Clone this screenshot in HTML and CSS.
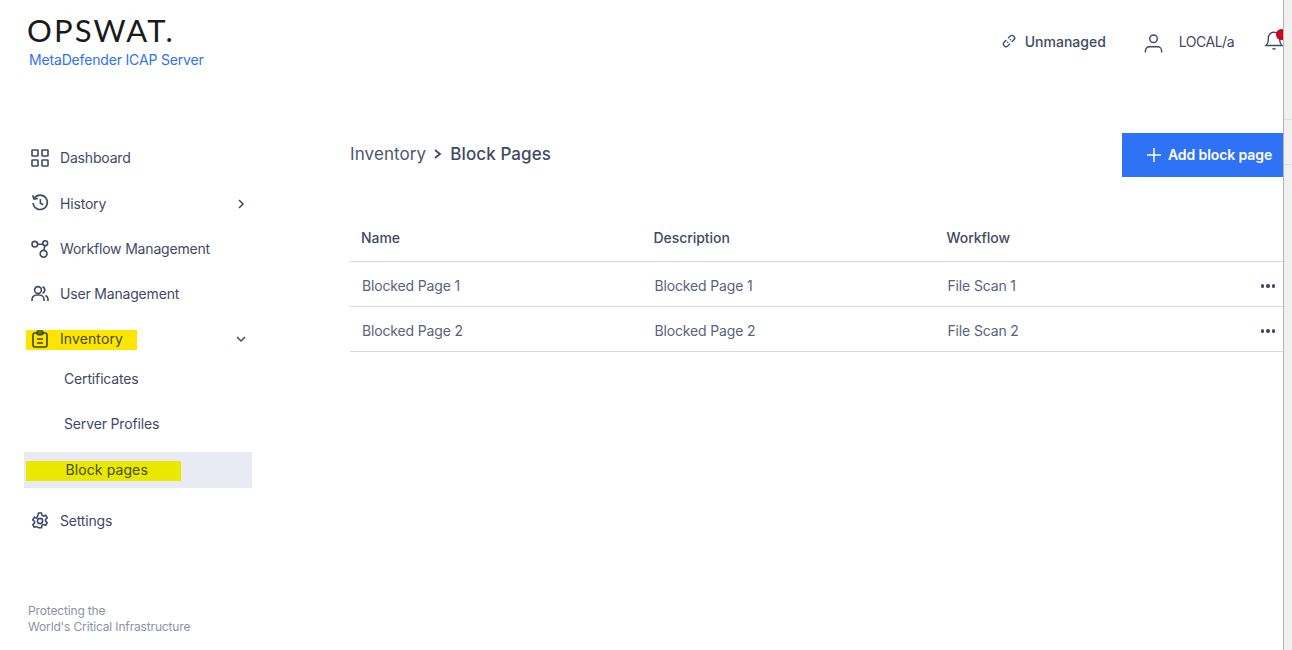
FILE: index.html
```html
<!DOCTYPE html>
<html lang="en">
<head>
<meta charset="utf-8">
<title>Block Pages</title>
<link rel="stylesheet" href="styles.css">
</head>
<body>
<div class="app">
  <aside class="sidebar">
    <div class="brand">
      <div class="logo">OPSWAT.</div>
      <div class="product">MetaDefender ICAP Server</div>
    </div>
    <nav class="nav">
      <a class="nav-item nav-first"><svg class="ico" viewBox="0 0 18 18"><rect x="1" y="1" width="6" height="6" rx=".6"/><rect x="11" y="1" width="6" height="6" rx=".6"/><rect x="1" y="11" width="6" height="6" rx=".6"/><rect x="11" y="11" width="6" height="6" rx=".6"/></svg><span>Dashboard</span></a>
      <a class="nav-item"><svg class="ico ico-up" viewBox="0 0 18 18"><path d="M3.400 4A7.200 7.200 0 1 1 2 9"/><path d="M1.600 1.200 3 5l3.800-.5"/><path d="M9.400 5v4.200l2.800 1.600"/></svg><span>History</span><svg class="chev" viewBox="0 0 12 12"><path d="M4 2l4 4-4 4"/></svg></a>
      <a class="nav-item"><svg class="ico" viewBox="0 0 18 18"><circle cx="3.800" cy="4.200" r="2.800"/><circle cx="14.200" cy="3.200" r="2.400"/><circle cx="12.600" cy="13.800" r="3.400"/><path d="M6.600 4.200h5.400M13.800 5.600l-.8 4.800"/></svg><span>Workflow Management</span></a>
      <a class="nav-item"><svg class="ico" viewBox="0 0 18 18"><circle cx="7" cy="5" r="3.400"/><path d="M1 16v-1.500A4.500 4.500 0 0 1 5.500 10h3a4.500 4.500 0 0 1 4.500 4.500V16"/><path d="M11.500 1.800a3.400 3.400 0 0 1 0 6.400M14.500 10.500a4.500 4.500 0 0 1 2.500 4V16"/></svg><span>User Management</span></a>
      <a class="nav-item nav-open"><span class="mark mark-top"></span><svg class="ico" viewBox="0 0 18 18"><rect x="2" y="3" width="14" height="14" rx="2"/><rect x="6" y="1" width="6" height="3.600" rx="1"/><path d="M6 9h6M6 13h6"/></svg><span class="label">Inventory</span><svg class="chev" viewBox="0 0 12 12"><path d="M2 4l4 4 4-4"/></svg></a>
      <a class="sub-item">Certificates</a>
      <a class="sub-item sub-gap">Server Profiles</a>
      <a class="sub-item sub-active"><span class="mark mark-sub"></span><span class="label">Block pages</span></a>
      <a class="nav-item"><svg class="ico" viewBox="0 0 18 18"><circle cx="9" cy="9" r="2.600"/><path d="M7.500 1h3l.5 2.300 1.500.8 2.200-.8 1.500 2.600-1.700 1.600v1.700l1.700 1.500-1.500 2.600-2.200-.7-1.500.8-.5 2.300h-3L7 15.400l-1.500-.8-2.200.7-1.500-2.600L3.500 11.200V9.500L1.800 7.900 3.300 5.300l2.200.8L7 3.300z"/></svg><span>Settings</span></a>
    </nav>
    <p class="tagline">Protecting the<br>World's Critical Infrastructure</p>
  </aside>
  <main class="main">
    <header class="topbar">
      <div class="status"><svg class="ico-link" viewBox="0 0 16 16"><g transform="rotate(-45 8 8)"><path d="M9.200 5.400h3.100a2.600 2.600 0 0 1 0 5.200H9.200"/><path d="M6.800 5.400H3.700a2.600 2.600 0 0 0 0 5.200h3.100"/><path d="M5.600 8h1.200M9.200 8h1.200"/></g></svg><span>Unmanaged</span></div>
      <div class="user"><svg class="ico-user" viewBox="0 0 20 20"><circle cx="10" cy="5.500" r="4"/><path d="M1.500 20v-2a4 4 0 0 1 4-4h9a4 4 0 0 1 4 4v2"/></svg><span>LOCAL/a</span></div>
      <div class="bell"><svg class="ico-bell" viewBox="0 0 20 20"><path d="M2 15.500c1.600-1.500 2.300-3 2.300-5.500V8a5.700 5.700 0 0 1 11.400 0v2c0 2.500.7 4 2.300 5.500z"/><path d="M8.500 18.300a1.800 1.800 0 0 0 3 0"/></svg><span class="dot"></span></div>
    </header>
    <section class="content">
      <div class="head">
        <h1 class="crumbs"><span class="crumb-parent">Inventory</span><svg class="crumb-sep" viewBox="0 0 10 12"><path d="M2 2l5 4-5 4"/></svg><span class="crumb-cur">Block Pages</span></h1>
        <button class="add"><svg viewBox="0 0 14 14"><path d="M7 0v14M0 7h14"/></svg><span>Add block page</span></button>
      </div>
      <div class="table">
        <div class="row row-head"><span>Name</span><span>Description</span><span>Workflow</span></div>
        <div class="row"><span>Blocked Page 1</span><span>Blocked Page 1</span><span>File Scan 1</span><b class="more"><i></i><i></i><i></i></b></div>
        <div class="row"><span>Blocked Page 2</span><span>Blocked Page 2</span><span>File Scan 2</span><b class="more"><i></i><i></i><i></i></b></div>
      </div>
    </section>
  </main>
  <div class="gutter"><span class="tick tick-1"></span><span class="tick tick-2"></span></div>
</div>
</body>
</html>
```

FILE: styles.css
```css
* { box-sizing: border-box; }
html, body { margin: 0; height: 100%; overflow: hidden; background: #fff; }
body { font-family: Inter, "Liberation Sans", sans-serif; color: #3f4a65; font-size: 14px; }
.app { display: flex; width: 1292px; height: 650px; }

.sidebar { width: 320px; flex: none; padding: 0 0 0 24px; display: flex; flex-direction: column; }
.brand { padding: 15px 0 0 4px; height: 135px; }
.logo { margin-left: -1px; font-family: Lato, sans-serif; font-weight: 400; font-size: 31px; line-height: 30px; letter-spacing: 2.1px; color: #1a1a1a; }
.product { margin: 6px 0 0 1px; color: #2f72f5; font-size: 14px; line-height: 18px; letter-spacing: -.17px; }

.nav { width: 228px; display: flex; flex-direction: column; }
.nav-item { position: relative; height: 45px; display: flex; align-items: center; padding-left: 7px; letter-spacing: -.18px; }
.nav-first { margin-bottom: 1px; }
.ico { position: relative; width: 18px; height: 18px; margin-right: 11px; fill: none; stroke: #3f4a65; stroke-width: 1.6; }
.ico-up { margin-top: -1px; }
.chev { position: absolute; right: 5px; top: 50%; width: 12px; height: 12px; margin-top: -6px; fill: none; stroke: #3f4a65; stroke-width: 1.5; }
.sub-item { position: relative; height: 36px; display: flex; align-items: center; padding: 0 0 2px 40px; letter-spacing: -.15px; }
.sub-gap { margin-top: 9px; }
.sub-active { margin-top: 10px; margin-bottom: 10px; background: #e8ebf3; padding-left: 41.5px; letter-spacing: .1px; }
.label { position: relative; }
.nav-open .label { color: #3f4a10; letter-spacing: .1px; }
.nav-open .ico { stroke: #3f4a10; }
.sub-active .label { color: #4a4a10; }
.mark { position: absolute; left: 2px; height: 20px; }
.mark-top { top: 14px; width: 111px; background: #ffe600; }
.mark-sub { top: 9px; width: 155px; background: #e9e900; }
.tagline { margin: 60px 0 0 4px; font-size: 12px; line-height: 16px; color: #8d93a3; letter-spacing: -.15px; }

.main { width: 963px; flex: none; display: flex; flex-direction: column; }
.topbar { height: 133px; display: flex; justify-content: flex-end; position: relative; padding-top: 30px; }
.status { display: flex; align-items: center; height: 22px; font-weight: 500; margin-right: 38px; }
.ico-link { width: 16px; height: 16px; margin: 0 8px 0 0; fill: none; stroke: #3f4a65; stroke-width: 1.4; }
.user { display: flex; align-items: center; height: 22px; font-size: 14px; letter-spacing: -.5px; }
.ico-user { width: 19px; height: 20px; margin: 3px 16px 0 0; fill: none; stroke: #3f4a65; stroke-width: 1.5; }
.bell { position: relative; width: 20px; height: 22px; margin-left: 30px; margin-right: -1px; }
.ico-bell { width: 20px; height: 20px; fill: none; stroke: #3f4a65; stroke-width: 1.4; }
.dot { position: absolute; left: 12px; top: -1px; width: 11px; height: 11px; border-radius: 50%; background: #d0021b; }

.content { padding-left: 30px; }
.head { height: 44px; display: flex; justify-content: space-between; align-items: center; }
.crumbs { margin: -3px 0 0; display: flex; align-items: center; font-size: 17px; font-weight: 400; }
.crumb-parent { color: #4d566e; letter-spacing: .1px; }
.crumb-sep { width: 10px; height: 12px; margin: 0 7px 0 7px; fill: none; stroke: #3f4a65; stroke-width: 1.8; }
.crumb-cur { font-weight: 500; letter-spacing: .1px; }
.add { width: 161px; height: 44px; border: 0; padding: 0 0 2px 25px; background: #2f72f5; color: #fff; font: 600 14px Inter, sans-serif; letter-spacing: -.1px; display: flex; align-items: center; gap: 7px; }
.add svg { width: 14px; height: 14px; margin-top: 2px; fill: none; stroke: #fff; stroke-width: 1.5; }

.table { margin-top: 39px; }
.row { position: relative; height: 45px; display: grid; grid-template-columns: 292.5px 293px 1fr; align-items: center; padding: 2px 0 0 12px; border-bottom: 1px solid #d3d9e8; color: #5a6379; letter-spacing: -.15px; }
.row-head { height: 46px; font-weight: 500; color: #3f4a65; padding: 0 0 2px 11px; letter-spacing: -.05px; }
.more { position: absolute; right: 8px; top: 22px; display: flex; gap: 2px; }
.more i { width: 3.5px; height: 3.5px; border-radius: 50%; background: #3f4a65; }

.gutter { position: relative; width: 9px; flex: none; background: #f0f0f0; border-left: 1px solid #b4b4b4; }
.tick { position: absolute; left: 0; right: 0; height: 1px; background: #d9dde6; }
.tick-1 { top: 119px; }
.tick-2 { top: 164px; }
```
